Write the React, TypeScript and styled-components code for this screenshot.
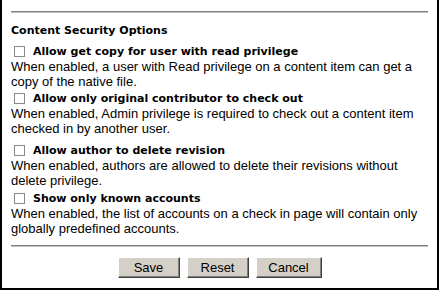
import styled, { createGlobalStyle } from 'styled-components'

const Global = createGlobalStyle`
  html, body {
    margin: 0;
    padding: 0;
    background: #ffffff;
  }
`

const Frame = styled.div`
  width: 439px;
  height: 290px;
  box-sizing: border-box;
  border: 2px solid #000000;
  border-top: none;
  padding: 11px 9px 0 9px;
  font-family: 'Liberation Sans', Arial, sans-serif;
  font-size: 13px;
  color: #000000;
`

const Rule = styled.div<{ $gap?: number }>`
  height: 0;
  margin-top: ${p => p.$gap ?? 0}px;
  border-top: 1px solid #808080;
  border-bottom: 1px solid #c0c0c0;
`

const Heading = styled.div`
  font-family: 'DejaVu Sans', Verdana, sans-serif;
  font-weight: bold;
  font-size: 11px;
  margin: 11px 0 6px 0;
`

const Option = styled.div<{ $after: number }>`
  margin-bottom: ${p => p.$after}px;
`

const Label = styled.label`
  display: flex;
  align-items: center;
  gap: 8px;
  padding-left: 3px;
  height: 16px;
  font-family: 'DejaVu Sans', Verdana, sans-serif;
  font-weight: bold;
  font-size: 11px;
`

const Box = styled.span`
  width: 9px;
  height: 9px;
  border: 1px solid #8a8a8a;
  background: #ffffff;
`

const Desc = styled.div`
  line-height: 15px;
`

const Buttons = styled.div`
  display: flex;
  justify-content: center;
  gap: 7px;
  margin-top: 10px;
`

const Button = styled.button<{ $w: number }>`
  width: ${p => p.$w}px;
  height: 21px;
  padding: 0;
  background: #d4d0c8;
  border: 1px solid;
  border-color: #ffffff #404040 #404040 #ffffff;
  box-shadow: inset -1px -1px 0 #808080;
  font-family: 'Liberation Sans', Arial, sans-serif;
  font-size: 13px;
  color: #000000;
`

const options = [
  {
    label: 'Allow get copy for user with read privilege',
    desc: 'When enabled, a user with Read privilege on a content item can get a copy of the native file.',
    after: 1,
  },
  {
    label: 'Allow only original contributor to check out',
    desc: 'When enabled, Admin privilege is required to check out a content item checked in by another user.',
    after: 6,
  },
  {
    label: 'Allow author to delete revision',
    desc: 'When enabled, authors are allowed to delete their revisions without delete privilege.',
    after: 2,
  },
  {
    label: 'Show only known accounts',
    desc: 'When enabled, the list of accounts on a check in page will contain only globally predefined accounts.',
    after: 0,
  },
]

export default function App() {
  return (
    <Frame>
      <Global />
      <Rule />
      <Heading>Content Security Options</Heading>
      {options.map(o => (
        <Option key={o.label} $after={o.after}>
          <Label>
            <Box />
            {o.label}
          </Label>
          <Desc>{o.desc}</Desc>
        </Option>
      ))}
      <Rule $gap={9} />
      <Buttons>
        <Button $w={62}>Save</Button>
        <Button $w={62}>Reset</Button>
        <Button $w={66}>Cancel</Button>
      </Buttons>
    </Frame>
  )
}
